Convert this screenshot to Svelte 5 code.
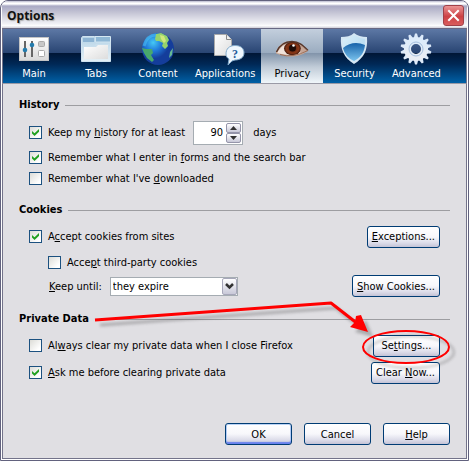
<script lang="ts">
  let active = $state('Privacy');
  let days = $state(90);
  let keepHistory = $state(true);
  let rememberForms = $state(true);
  let rememberDownloads = $state(false);
  let acceptCookies = $state(true);
  let thirdParty = $state(false);
  let keepUntil = $state('expire');
  let clearOnClose = $state(false);
  let askFirst = $state(true);

  const tabs = ['Main', 'Tabs', 'Content', 'Applications', 'Privacy', 'Security', 'Advanced'];
  const teeth = Array.from({ length: 14 }, (_, i) => (i * 360) / 14);
</script>

<div class="window">
  <header class="titlebar">
    <h1>Options</h1>
    <button class="close" aria-label="Close">
      <svg width="13" height="13" viewBox="0 0 13 13">
        <path d="M2 2 L11 11 M11 2 L2 11" stroke="#fff" stroke-width="2" stroke-linecap="square" />
      </svg>
    </button>
  </header>

  <nav class="tabs">
    {#each tabs as tab}
      <button class="tab" class:active={active === tab} onclick={() => (active = tab)}>
        <svg width="34" height="34" viewBox="0 0 34 34">
          {#if tab === 'Main'}
            <rect x="2.500" y="5.500" width="29" height="23" fill="url(#panel)" stroke="#c4c4c4" />
            <path d="M8 9v16M15 9v16" stroke="#666" stroke-width="2" />
            <circle cx="8" cy="18" r="2.300" fill="#247cad" />
            <circle cx="15" cy="13" r="2.300" fill="#247cad" />
            <rect x="21.500" y="9.500" width="6" height="5" rx="1" fill="#c8c8c8" stroke="#aaa" />
            <rect x="21.500" y="18.500" width="6" height="6" rx="1" fill="#fff" stroke="#aaa" />
          {:else if tab === 'Tabs'}
            <path d="M16 4.500h15.500v9H16z" fill="#8fb8d6" stroke="#d5e8f3" />
            <path d="M2.500 29.500V6l1-1.500h12l1 1.500v4h15v19.500z" fill="url(#folder)" stroke="#cfe3f0" />
            <path d="M4 6h11v4H4z" fill="#8db4d4" />
            <path d="M4 14h11l2-2h13v2.500H4z" fill="#c9dfed" />
            <path d="M5 15h12l2-2h10v14H5z" fill="url(#paper)" />
          {:else if tab === 'Content'}
            <circle cx="17" cy="17" r="16" fill="url(#ocean)" />
            <path d="M15 2l5-1 6 3 2 4-2 3 1 3-3 3-3-3 1-3-4-2-3 0-1-2z" fill="#96d36c" />
            <path d="M1 16l4 1 6 0 1 4-2 2 3 5-2 2-5-4-3-5z" fill="#48a96c" />
            <path d="M32 16l-3 4-1 6 3-3z" fill="#66b895" />
            <path d="M19 3l4 1 2 5-2 2-3-4z" fill="#d0e97c" />
            <path d="M3 14Q6 3 15 3" fill="none" stroke="#54c9f4" stroke-width="3" opacity="0.500" />
          {:else if tab === 'Applications'}
            <path d="M6.500 2.500h12l5 5v16h-17z" fill="url(#paper)" stroke="#aaa" />
            <path d="M18.500 2.500v5h5" fill="#eee" stroke="#888" />
            <path d="M27 13.500c6 0 9 3 9 7.500s-4 7-9 7l-3 1-4 4 1-6c-2-1-3-3-3-5 0-5 3-8.500 9-8.500z" fill="#eef6fd" stroke="#82aacb" />
            <text x="24" y="26" class="question">?</text>
          {:else if tab === 'Privacy'}
            <path d="M1 20C4 11 10 9 17 9.500c7 0 11 4 16 9-4 4-11 6-18 6-6 0-10-2-14-3z" fill="#c9a895" />
            <path d="M2 21C6 14 10 12 15 11.500c8-.500 12 3 17 7-5 3-10 4.500-16 4.500-5 0-9-1-14-2z" fill="#f0e2da" />
            <ellipse cx="17.500" cy="16.500" rx="8.500" ry="6.800" fill="url(#iris)" />
            <circle cx="17.500" cy="16" r="3.500" fill="#1d0b07" />
            <path d="M1.500 20C5 12 10 9.500 17 9.500c7 0 11 4 16 9" fill="none" stroke="#55352a" stroke-width="1.500" />
            <path d="M26 13l7 5.500-8 3z" fill="#a87f6a" opacity="0.600" />
            <path d="M5 22.500q12 4 28-4" fill="none" stroke="#9c6f5b" />
            <circle cx="18.500" cy="13.500" r="1.300" fill="#fff" />
          {:else if tab === 'Security'}
            <path d="M17 1q5 4 13 4c1 13-3 21-13 27C7 26 3 17 4 5c5 0 10-1 13-4z" fill="#d4e7f4" />
            <path d="M17 3q5 3 11 4c0 11-3 17-11 22C9 24 6 17 6 7c5 0 9-2 11-4z" fill="url(#shield)" />
            <path d="M6 16Q16 8 28 13c-1 8-4 12-11 16Q8 25 6 16z" fill="url(#deep)" />
          {:else}
            {#each teeth as angle}
              <path d="M14.500 7L16 1.500h2L19.500 7z" fill="#dceafa" transform="rotate({angle} 17 17)" />
            {/each}
            <circle cx="17" cy="17" r="8.500" fill="none" stroke="url(#gear)" stroke-width="7" />
            <circle cx="17" cy="17" r="7" fill="none" stroke="#a5bfde" />
          {/if}
        </svg>
        <span>{tab}</span>
      </button>
    {/each}
  </nav>

  <main>
    <section>
      <h2>History</h2>
      <div class="row spin-row">
        <label><input type="checkbox" bind:checked={keepHistory} /><span>Keep my <u>h</u>istory for at least</span></label>
        <div class="spin">
          <input type="number" aria-label="Days of history" bind:value={days} />
          <div class="arrows">
            <button aria-label="More days" onclick={() => days++}>
              <svg width="7" height="4" viewBox="0 0 7 4"><path d="M0 4L3.500 0L7 4z" fill="#333" /></svg>
            </button>
            <button aria-label="Fewer days" onclick={() => days--}>
              <svg width="7" height="4" viewBox="0 0 7 4"><path d="M0 0L3.500 4L7 0z" fill="#333" /></svg>
            </button>
          </div>
        </div>
        <span class="unit">days</span>
      </div>
      <div class="row short">
        <label><input type="checkbox" bind:checked={rememberForms} /><span>Remember what I enter in <u>f</u>orms and the search bar</span></label>
      </div>
      <div class="row short">
        <label><input type="checkbox" bind:checked={rememberDownloads} /><span>Remember what I've <u>d</u>ownloaded</span></label>
      </div>
    </section>

    <section>
      <h2>Cookies</h2>
      <div class="row">
        <label><input type="checkbox" bind:checked={acceptCookies} /><span>A<u>c</u>cept cookies from sites</span></label>
        <button class="btn end"><u>E</u>xceptions...</button>
      </div>
      <div class="row indent">
        <label><input type="checkbox" bind:checked={thirdParty} /><span>Acce<u>p</u>t third-party cookies</span></label>
      </div>
      <div class="row indent">
        <label class="until" for="keep-until"><span><u>K</u>eep until:</span></label>
        <div class="select">
          <select id="keep-until" bind:value={keepUntil}>
            <option value="expire">they expire</option>
            <option value="close">I close Firefox</option>
            <option value="ask">ask me every time</option>
          </select>
          <span class="drop">
            <svg width="9" height="7" viewBox="0 0 9 7"><path d="M1 1l3.500 3.500L8 1" fill="none" stroke="#333" stroke-width="2.500" /></svg>
          </span>
        </div>
        <button class="btn end"><u>S</u>how Cookies...</button>
      </div>
    </section>

    <section>
      <h2>Private Data</h2>
      <div class="row">
        <label><input type="checkbox" bind:checked={clearOnClose} /><span>Al<u>w</u>ays clear my private data when I close Firefox</span></label>
        <button class="btn end">Se<u>t</u>tings...</button>
      </div>
      <div class="row">
        <label><input type="checkbox" bind:checked={askFirst} /><span><u>A</u>sk me before clearing private data</span></label>
        <button class="btn end">Clear <u>N</u>ow...</button>
      </div>
    </section>
  </main>

  <footer>
    <button class="btn default">OK</button>
    <button class="btn">Cancel</button>
    <button class="btn"><u>H</u>elp</button>
  </footer>

  <svg class="callout" width="360" height="84" viewBox="0 0 360 84" aria-hidden="true">
    <g filter="url(#soft)" opacity="0.300" transform="translate(5 5)" fill="none" stroke="#333" stroke-width="3">
      <path d="M5 31L241 14L266 34" />
      <path d="M278 43L260 38L271 26z" fill="#333" stroke="none" />
      <ellipse cx="316" cy="58" rx="43" ry="16" stroke-width="2" />
    </g>
    <path d="M5 31L241 14L268 35" fill="none" stroke="#f00" stroke-width="3" stroke-linejoin="round" />
    <path d="M278 43L260 38L265 33L266 27L271 26z" fill="#f00" />
    <ellipse cx="316" cy="58" rx="43" ry="16" fill="none" stroke="#f00" stroke-width="2" />
  </svg>
</div>

<svg class="defs" width="0" height="0" aria-hidden="true">
  <defs>
    <linearGradient id="panel" x2="0" y2="1"><stop stop-color="#fff" /><stop offset="1" stop-color="#d9d9d9" /></linearGradient>
    <linearGradient id="folder" x2="0" y2="1"><stop stop-color="#b5d3e7" /><stop offset="1" stop-color="#e5f0f6" /></linearGradient>
    <linearGradient id="paper" x2="1" y2="1"><stop stop-color="#fff" /><stop offset="1" stop-color="#ddd" /></linearGradient>
    <radialGradient id="ocean" cx="0.350" cy="0.300"><stop stop-color="#45c9f5" /><stop offset="0.500" stop-color="#227ddc" /><stop offset="1" stop-color="#143d9b" /></radialGradient>
    <radialGradient id="iris"><stop stop-color="#4b190c" /><stop offset="0.700" stop-color="#8a3817" /><stop offset="1" stop-color="#41190e" /></radialGradient>
    <linearGradient id="shield" x2="1" y2="1"><stop stop-color="#d9effa" /><stop offset="1" stop-color="#a9d4ee" /></linearGradient>
    <linearGradient id="deep" x2="0" y2="1"><stop stop-color="#1763aa" /><stop offset="1" stop-color="#7cc4ee" /></linearGradient>
    <linearGradient id="gear" x2="0" y2="1"><stop stop-color="#ddecfb" /><stop offset="1" stop-color="#e9edf4" /></linearGradient>
    <filter id="soft" x="-10%" y="-30%" width="120%" height="160%"><feGaussianBlur stdDeviation="1.500" /></filter>
  </defs>
</svg>

<style>
  :global(body) {
    margin: 0;
    background: #fff;
  }

  .window, button, input, select {
    font-family: Tahoma, "DejaVu Sans Condensed", sans-serif;
    font-size: 11px;
    color: #000;
  }

  .window {
    position: relative;
    box-sizing: border-box;
    border: 1px solid #62627e;
    border-radius: 8px 8px 0 0;
    background: #fff;
    padding: 0 1px 1px;
    overflow: hidden;
  }

  .titlebar {
    display: flex;
    align-items: center;
    justify-content: space-between;
    height: 27px;
    box-sizing: border-box;
    padding: 2px 3px 0 5px;
    background: linear-gradient(#b9b9cf 0, #fff 2px, #fff 3px, #a9a9c4 5px, #c6c6d6 12px, #f2f2f6 23px, #fff 25px, #d8d8e0 26px);
  }

  h1 {
    margin: 0;
    font-family: "Trebuchet MS", "Open Sans", sans-serif;
    font-size: 12px;
    color: #111;
    text-shadow: 1px 1px 1px #aaa;
  }

  .close {
    display: grid;
    place-items: center;
    width: 21px;
    height: 21px;
    padding: 0;
    border: 1px solid #a04048;
    border-radius: 3px;
    background: linear-gradient(#eb9494, #cc4145 55%, #d95d5d);
  }

  .tabs {
    display: flex;
    height: 56px;
    box-sizing: border-box;
    border: 1px solid #73738a;
    border-top-color: #686883;
    border-bottom: 1px solid #9a9aa6;
    background: linear-gradient(#5d78a5, #294573 44%, #001636 45%, #002856 65%, #0060a6);
  }

  .tab {
    display: flex;
    flex-direction: column;
    align-items: center;
    min-width: 62px;
    padding: 3px 6px 0;
    border: 0;
    background: none;
    color: #fff;
    line-height: 16px;
  }

  .tab svg {
    flex: none;
    overflow: visible;
  }

  .tab.active {
    color: #000;
    background: linear-gradient(#c3cfdd, #9bacc0 44%, #8294aa 45%, #c0cbd7 70%, #f0f6fa);
  }

  .question {
    font: bold 12px "Liberation Serif", serif;
    fill: #255c99;
  }

  main {
    padding: 11px 16px 0;
    border: solid #73738a;
    border-width: 0 1px;
    background: #e0dfe3;
  }

  section {
    padding-bottom: 11px;
  }

  h2 {
    display: flex;
    align-items: center;
    gap: 6px;
    margin: 0 0 3px;
    font-size: 11px;
    line-height: 20px;
  }

  h2::after {
    content: "";
    flex: 1;
    height: 1px;
    background: #9d9da1;
  }

  .row {
    display: flex;
    align-items: center;
    height: 27px;
    padding: 0 10px;
  }

  .row.spin-row {
    height: 29px;
  }

  .row.short {
    height: 21px;
  }

  .row.indent {
    height: 24px;
    padding-left: 29px;
  }

  label {
    display: flex;
    align-items: center;
    gap: 6px;
    white-space: nowrap;
  }

  input[type="checkbox"] {
    appearance: none;
    flex: none;
    width: 13px;
    height: 13px;
    margin: 0;
    border: 1px solid #1c5180;
    background: linear-gradient(135deg, #dcdcd7, #fff 80%);
  }

  input[type="checkbox"]:checked::before {
    content: "";
    display: block;
    width: 7px;
    height: 7px;
    margin: 2px;
    background: #21a121;
    clip-path: polygon(0 28%, 36% 60%, 100% 0, 100% 40%, 36% 100%, 0 66%);
  }

  .spin {
    display: flex;
    box-sizing: border-box;
    width: 50px;
    height: 24px;
    margin-left: 8px;
    padding: 1px;
    border: 1px solid #a5acb2;
    background: #fff;
  }

  .spin input {
    appearance: textfield;
    flex: 1;
    min-width: 0;
    padding: 0 3px 0 0;
    border: 0;
    outline: 0;
    background: none;
    text-align: right;
  }

  .spin input::-webkit-inner-spin-button {
    display: none;
  }

  .arrows {
    display: flex;
    flex-direction: column;
    width: 15px;
  }

  .arrows button {
    flex: 1;
    display: grid;
    place-items: center;
    min-height: 0;
    padding: 0;
    border: 1px solid #9595aa;
    border-radius: 2px;
    background: linear-gradient(#fff, #c8c8d8);
  }

  .unit {
    margin-left: 10px;
  }

  .until {
    margin: 0 8px 0 1px;
  }

  .select {
    position: relative;
    width: 128px;
    height: 19px;
  }

  select {
    appearance: none;
    box-sizing: border-box;
    width: 100%;
    height: 100%;
    padding: 0 18px 0 2px;
    border: 1px solid #a5acb2;
    border-radius: 0;
    background: #fff;
  }

  .drop {
    position: absolute;
    top: 1px;
    right: 1px;
    bottom: 1px;
    display: grid;
    place-items: center;
    width: 15px;
    box-sizing: border-box;
    border: 1px solid #a7a7ba;
    border-radius: 2px;
    background: linear-gradient(#fff, #c8c8d8);
    pointer-events: none;
  }

  .btn {
    box-sizing: border-box;
    height: 22px;
    min-width: 67px;
    padding: 0 4px;
    border: 1px solid #003c74;
    border-radius: 3px;
    background: linear-gradient(#fff, #f7f7fb 50%, #dcdce9 80%, #c4c3d6);
    white-space: nowrap;
  }

  .btn.default {
    box-shadow: inset 0 -2px 1px #6982ee, inset 0 0 0 1px #bcd4f6;
  }

  .end {
    margin-left: auto;
  }

  footer {
    display: flex;
    justify-content: flex-end;
    gap: 12px;
    padding: 26px 16px 13px;
    border: solid #73738a;
    border-width: 0 1px 1px;
    background: #e0dfe3;
  }

  .callout {
    position: absolute;
    top: 288px;
    right: 18px;
    overflow: visible;
    pointer-events: none;
  }

  .defs {
    position: absolute;
  }
</style>
